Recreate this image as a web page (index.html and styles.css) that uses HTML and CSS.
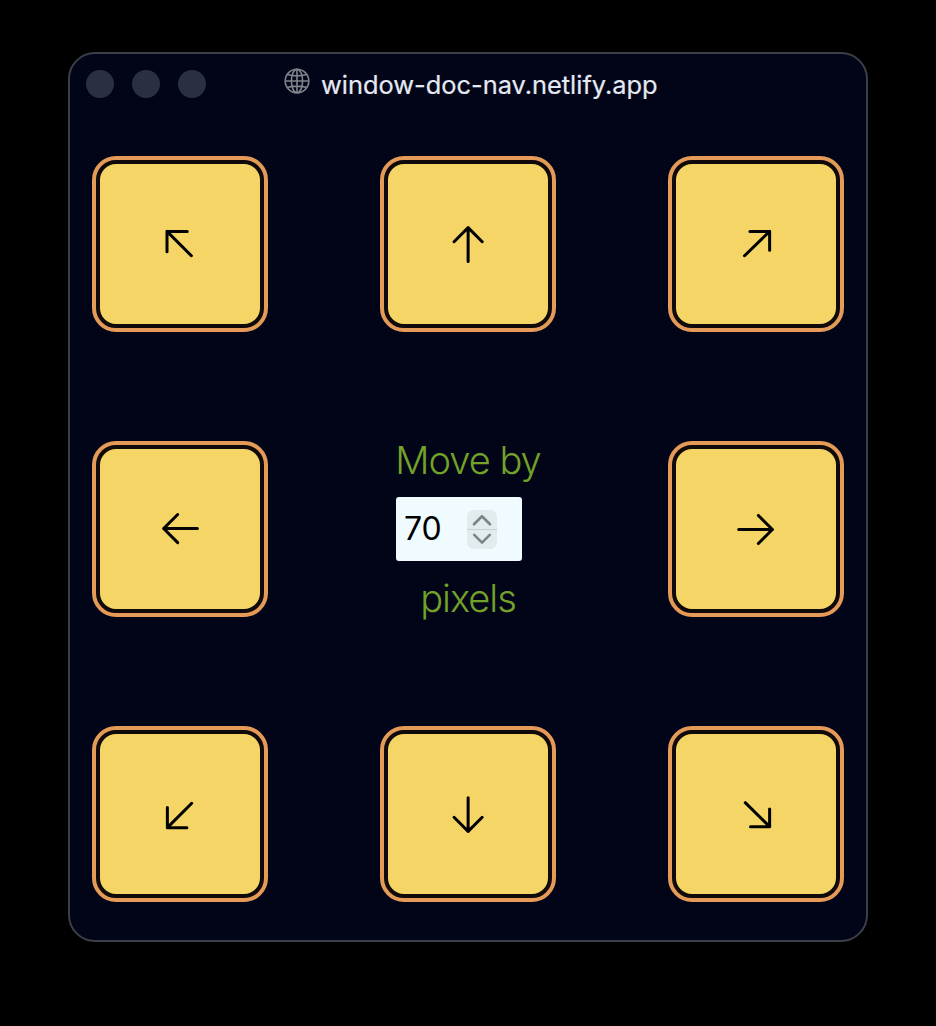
FILE: index.html
```html
<!DOCTYPE html>
<html lang="en">
<head>
<meta charset="utf-8">
<title>window-doc-nav.netlify.app</title>
<link rel="stylesheet" href="styles.css">
</head>
<body>
<main class="window">
  <header class="titlebar">
    <div class="lights"><span class="light"></span><span class="light"></span><span class="light"></span></div>
    <div class="address">
      <svg class="globe" viewBox="0 0 26 26" fill="none" stroke="currentColor" stroke-width="1.6">
        <circle cx="13" cy="13" r="11.8"/>
        <ellipse cx="13" cy="13" rx="5.6" ry="11.8"/>
        <path d="M13 1.2v23.600M1.200 13h23.600M3.200 6.500q9.800 2.800 19.600 0M3.200 19.500q9.800-2.800 19.600 0"/>
      </svg>
      <span class="url">window-doc-nav.netlify.app</span>
    </div>
  </header>
  <section class="pad">
    <button class="key" aria-label="Move up left"><svg class="arrow" viewBox="0 0 24 24"><path d="M17.800 18 4.800 5M4.800 5v10.800M4.800 5h10.800"/></svg></button>
    <button class="key" aria-label="Move up"><svg class="arrow" viewBox="0 0 24 24"><path d="M4.300 10.500 11.800 3m0 0 7.500 7.500M11.800 3v18"/></svg></button>
    <button class="key" aria-label="Move up right"><svg class="arrow" viewBox="0 0 24 24"><path d="M5.600 18 19 5M19 5v10M19 5H8.500"/></svg></button>
    <button class="key" aria-label="Move left"><svg class="arrow" viewBox="0 0 24 24"><path d="M10.500 19 3 11.500l7.500-7.500M3 11.500h18"/></svg></button>
    <div class="amount">
      <span class="caption">Move by</span>
      <div class="field">
        <span class="value">70</span>
        <span class="spinner">
          <svg class="chevron" viewBox="0 0 30 19"><path d="M7 14 15 6l8 8"/></svg>
          <svg class="chevron" viewBox="0 0 30 19"><path d="M7 5l8 8 8-8"/></svg>
        </span>
      </div>
      <span class="caption">pixels</span>
    </div>
    <button class="key" aria-label="Move right"><svg class="arrow" viewBox="0 0 24 24"><path d="M13 4.500 20.500 12 13 19.500M20.500 12H2.500"/></svg></button>
    <button class="key" aria-label="Move down left"><svg class="arrow" viewBox="0 0 24 24"><path d="M18 6 5 19M5 19V8.200M5 19h10.400"/></svg></button>
    <button class="key" aria-label="Move down"><svg class="arrow" viewBox="0 0 24 24"><path d="M4.300 13.500 11.800 21m0 0 7.500-7.500M11.800 21V3"/></svg></button>
    <button class="key" aria-label="Move down right"><svg class="arrow" viewBox="0 0 24 24"><path d="M6 5.700 19 18.500M19 18.500V9M19 18.500H8.800"/></svg></button>
  </section>
</main>
</body>
</html>
```
FILE: styles.css
```css
html, body {
  margin: 0;
  background: #000;
}
body {
  padding: 52px 0 0 68px;
  height: 1026px;
  box-sizing: border-box;
  overflow: hidden;
  font-family: Inter, "Liberation Sans", sans-serif;
}
.window {
  box-sizing: border-box;
  width: 800px;
  height: 890px;
  background: #010517;
  border: 2px solid #3b3f47;
  border-radius: 27px;
}
.titlebar {
  display: flex;
  align-items: center;
  gap: 78px;
  height: 28px;
  padding: 16px 16px 0;
}
.lights {
  display: flex;
  gap: 18px;
}
.light {
  width: 28px;
  height: 28px;
  border-radius: 50%;
  background: #2a3040;
}
.address {
  display: flex;
  align-items: center;
  gap: 11px;
  color: #e4e9f4;
}
.globe {
  width: 26px;
  height: 26px;
  color: #7f838c;
  margin-top: -6px;
}
.url {
  font-size: 25.400px;
  line-height: 30px;
  -webkit-text-stroke: 0.2px #e4e9f4;
  margin-top: 2px;
}
.pad {
  display: grid;
  grid-template-columns: repeat(3, 176px);
  grid-auto-rows: 176px;
  justify-content: space-between;
  row-gap: 109px;
  margin-top: 58px;
  padding: 0 22px;
}
.key {
  display: flex;
  align-items: center;
  justify-content: center;
  box-sizing: border-box;
  width: 168px;
  height: 168px;
  margin: 4px;
  padding: 0;
  background: #f5d565;
  border: 4px solid #100a0a;
  border-radius: 20px;
  outline: 4px solid #e59a57;
  outline-offset: 0;
}
.arrow {
  width: 45px;
  height: 45px;
  fill: none;
  stroke: #000;
  stroke-width: 1.600;
  stroke-linecap: round;
  stroke-linejoin: round;
}
.amount {
  display: flex;
  flex-direction: column;
  align-items: center;
  justify-content: center;
  gap: 14px;
  justify-self: center;
  width: 144px;
}
.caption {
  flex: none;
  font-size: 38px;
  font-weight: 300;
  line-height: 46px;
  letter-spacing: -1px;
  white-space: nowrap;
  color: #74a12a;
}
.field {
  flex: none;
  align-self: flex-start;
  box-sizing: border-box;
  display: flex;
  align-items: center;
  width: 126px;
  height: 64px;
  padding-left: 8px;
  background: #f0fbff;
  border-radius: 3px;
}
.value {
  width: 63px;
  font-size: 32px;
  line-height: 38px;
  color: #000;
}
.spinner {
  display: flex;
  flex-direction: column;
  width: 30px;
  height: 39px;
  background: #e2ecee;
  border-radius: 7px;
}
.chevron {
  width: 30px;
  height: 19.500px;
  fill: none;
  stroke: #7d8485;
  stroke-width: 2.600;
  stroke-linecap: round;
  stroke-linejoin: round;
}
.chevron + .chevron {
  border-top: 1px solid #c9d2d4;
  box-sizing: border-box;
}
```
